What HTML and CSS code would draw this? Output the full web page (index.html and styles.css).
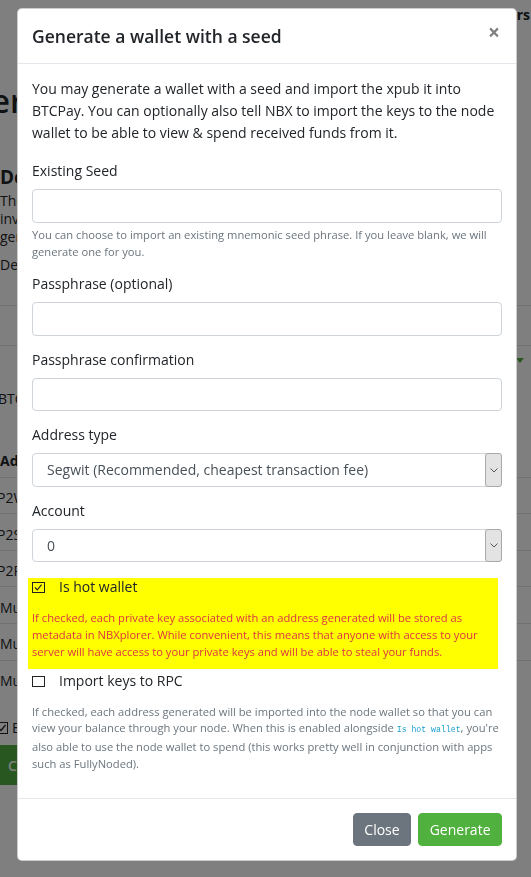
FILE: index.html
```html
<!DOCTYPE html>
<html lang="en">
<head>
<meta charset="utf-8">
<title>Generate a wallet with a seed</title>
<link rel="stylesheet" href="styles.css">
</head>
<body>
<div class="page">
  <nav class="topnav"><span class="nav-item">Server settings</span><span class="nav-item">Users</span></nav>
  <h2 class="page-title">Derivation Scheme</h2>
  <h4 class="section-title">Derivation Scheme</h4>
  <p class="section-text">The DerivationScheme represents the destination of the funds<br>invoices. It is generated by your wallet software. Please verify<br>generating the right addresses.</p>
  <div class="scheme-label">DerivationScheme</div>
  <div class="scheme-box"></div>
  <div class="toggle-row"><span class="caret"></span></div>
  <div class="coin-line">BTC address type</div>
  <div class="bg-table">
    <div class="bg-row bg-head">Address type</div>
    <div class="bg-row shifted">P2WPKH</div>
    <div class="bg-row shifted">P2SH-P2WPKH</div>
    <div class="bg-row shifted">P2PKH</div>
    <div class="bg-row">Multi-sig P2WSH</div>
    <div class="bg-row">Multi-sig P2SH-P2WSH</div>
    <div class="bg-row">Multi-sig P2SH</div>
  </div>
  <div class="bg-check"><span class="bg-box"><svg width="10" height="10" viewBox="0 0 10 10"><polyline points="1.5,5 4,7.5 8.5,2" fill="none" stroke="#212529" stroke-width="1.3"/></svg></span><span>Enabled</span></div>
  <div class="bg-btn">Continue</div>
</div>

<div class="backdrop"></div>

<div class="modal">
  <div class="modal-content">
    <div class="modal-header">
      <h5 class="modal-title">Generate a wallet with a seed</h5>
      <button class="close" type="button">×</button>
    </div>
    <div class="modal-body">
      <p class="intro">You may generate a wallet with a seed and import the xpub it into BTCPay. You can optionally also tell NBX to import the keys to the node wallet to be able to view &amp; spend received funds from it.</p>

      <div class="form-group">
        <label class="form-label">Existing Seed</label>
        <input class="form-control" type="text">
        <div class="form-text">You can choose to import an existing mnemonic seed phrase. If you leave blank, we will generate one for you.</div>
      </div>

      <div class="form-group">
        <label class="form-label">Passphrase (optional)</label>
        <input class="form-control" type="password">
      </div>

      <div class="form-group">
        <label class="form-label">Passphrase confirmation</label>
        <input class="form-control" type="password">
      </div>

      <div class="form-group">
        <label class="form-label">Address type</label>
        <div class="select-box">
          <span class="select-value">Segwit (Recommended, cheapest transaction fee)</span>
          <span class="select-arrow"><svg width="8" height="5" viewBox="0 0 8 5"><polyline points="0.5,0.5 4,4 7.5,0.5" fill="none" stroke="#555" stroke-width="1"/></svg></span>
        </div>
      </div>

      <div class="form-group">
        <label class="form-label">Account</label>
        <div class="select-box">
          <span class="select-value">0</span>
          <span class="select-arrow"><svg width="8" height="5" viewBox="0 0 8 5"><polyline points="0.5,0.5 4,4 7.5,0.5" fill="none" stroke="#555" stroke-width="1"/></svg></span>
        </div>
      </div>

      <div class="hot-wallet">
        <div class="check-row">
          <span class="check-box"><svg width="11" height="11" viewBox="0 0 11 11"><polyline points="2,5.5 4.5,8 9,2.5" fill="none" stroke="#222" stroke-width="1.2"/></svg></span>
          <span class="check-label">Is hot wallet</span>
        </div>
        <div class="danger-text">If checked, each private key associated with an address generated will be stored as metadata in NBXplorer. While convenient, this means that anyone with access to your server will have access to your private keys and will be able to steal your funds.</div>
      </div>

      <div class="check-row rpc-row">
        <span class="check-box"></span>
        <span class="check-label">Import keys to RPC</span>
      </div>
      <div class="form-text rpc-help">If checked, each address generated will be imported into the node wallet so that you can view your balance through your node. When this is enabled alongside <code>Is hot wallet</code>, you're also able to use the node wallet to spend (this works pretty well in conjunction with apps such as FullyNoded).</div>
    </div>
    <div class="modal-footer">
      <button class="btn btn-secondary" type="button">Close</button>
      <button class="btn btn-primary" type="button">Generate</button>
    </div>
  </div>
</div>
</body>
</html>
```

FILE: styles.css
```css
* { box-sizing: border-box; }

html, body {
  margin: 0;
  padding: 0;
}

body {
  width: 531px;
  height: 877px;
  overflow: hidden;
  background: #fff;
  color: #212529;
  font-family: "Open Sans", "Liberation Sans", sans-serif;
  font-size: 14px;
  line-height: 1.5;
}

/* ---------- background page ---------- */
.page {
  white-space: nowrap;
}

.topnav {
  height: 81px;
  display: flex;
  justify-content: flex-end;
  gap: 20px;
  padding: 5px 1px 0 0;
  font-size: 14px;
  font-weight: 700;
  line-height: 20px;
}

.page-title {
  margin: 0 0 0 -32px;
  font-size: 32px;
  font-weight: 600;
  line-height: 40px;
}

.section-title {
  margin: 44px 0 0;
  font-size: 19px;
  font-weight: 700;
  line-height: 24px;
}

.section-text {
  margin: 3px 0 0;
  line-height: 18px;
}

.scheme-label {
  margin-top: 10px;
  line-height: 18px;
}

.scheme-box {
  margin-top: 31px;
  height: 41px;
  border-top: 1px solid #dee2e6;
  border-bottom: 1px solid #dee2e6;
}

.toggle-row {
  height: 28px;
  display: flex;
  justify-content: flex-end;
  align-items: center;
  padding-right: 7px;
}

.caret {
  width: 0;
  height: 0;
  border-left: 4px solid transparent;
  border-right: 4px solid transparent;
  border-top: 5px solid #51b13e;
}

.coin-line {
  margin: 16px 0 0 -2px;
  line-height: 18px;
}

.bg-table {
  margin-top: 32px;
}

.bg-row {
  height: 36.6px;
  padding-top: 9.5px;
  line-height: 22px;
  border-top: 1px solid #dee2e6;
}

.bg-head {
  border-top: none;
  font-weight: 700;
}

.bg-row.shifted {
  margin-left: -3px;
}

.bg-check {
  margin: 21px 0 0 -4px;
  display: flex;
  align-items: center;
  gap: 4px;
  line-height: 22px;
}

.bg-box {
  width: 12px;
  height: 12px;
  border: 1px solid #212529;
  display: flex;
  align-items: center;
  justify-content: center;
}

.bg-btn {
  margin: 6px 0 0 -4px;
  width: 120px;
  height: 40px;
  padding: 0 12px;
  display: flex;
  align-items: center;
  background: #51b13e;
  color: #fff;
  font-weight: 600;
}

.backdrop {
  position: fixed;
  inset: 0;
  background: rgba(0, 0, 0, 0.5);
}

/* ---------- modal ---------- */
.modal {
  position: fixed;
  top: 8px;
  left: 17px;
  width: 500px;
}

.modal-content {
  background: #fff;
  border: 1px solid rgba(0, 0, 0, 0.2);
  border-radius: 5px;
}

.modal-header {
  display: flex;
  justify-content: space-between;
  align-items: flex-start;
  padding: 14px;
  border-bottom: 1px solid #e3e6ea;
}

.modal-title {
  margin: 0;
  font-size: 17.5px;
  font-weight: 600;
  line-height: 26.25px;
  color: #212529;
}

.close {
  margin: 0;
  padding: 0 2px 0 0;
  border: 0;
  background: transparent;
  font-family: inherit;
  font-size: 21px;
  font-weight: 700;
  line-height: 19px;
  color: #000;
  opacity: 0.5;
}

.modal-body {
  padding: 14px;
}

.intro {
  margin: 0 0 16px;
  line-height: 22px;
}

.form-group {
  margin-bottom: 13px;
}

.form-label {
  display: block;
  margin-bottom: 8px;
  line-height: 21px;
}

.form-control {
  display: block;
  width: 100%;
  height: 33.5px;
  padding: 0 10.5px;
  border: 1px solid #ced4da;
  border-radius: 4px;
  font: inherit;
  color: #495057;
  background: #fff;
}

.form-text {
  margin-top: 4px;
  font-size: 11.2px;
  line-height: 16.8px;
  color: #6c757d;
}

.select-box {
  display: flex;
  height: 33.5px;
  border: 1px solid #ced4da;
  border-radius: 4px;
  background: #fff;
}

.select-value {
  flex: 1;
  padding-left: 14px;
  line-height: 31.5px;
  color: #495057;
}

.select-arrow {
  width: 17px;
  margin: -1px -1px -1px 0;
  display: flex;
  align-items: center;
  justify-content: center;
  background: #e3e3e3;
  border: 1px solid #a9a9a9;
  border-radius: 3px;
}

.hot-wallet {
  margin: 15.6px 0 0 -4px;
  width: 470px;
  padding: 0 0 8.6px 4px;
  background: #ffff00;
}

.check-row {
  display: flex;
  align-items: flex-start;
  line-height: 18px;
}

.check-box {
  width: 12.5px;
  height: 11.5px;
  margin-top: 4px;
  border: 1.2px solid #222;
  display: flex;
  align-items: center;
  justify-content: center;
}

.check-label {
  margin-left: 14.5px;
  font-size: 14px;
}

.danger-text {
  margin-top: 14px;
  font-size: 11.2px;
  line-height: 16.8px;
  color: #dc3545;
}

.rpc-row {
  margin-top: 2.6px;
}

.rpc-help {
  margin-top: 14px;
  margin-bottom: 11px;
}

.rpc-help code {
  font-family: "Liberation Mono", "DejaVu Sans Mono", monospace;
  font-size: 8.2px;
  color: #1b9fd1;
}

.modal-footer {
  display: flex;
  justify-content: flex-end;
  gap: 7px;
  padding: 14px;
  border-top: 1px solid #e3e6ea;
}

.btn {
  height: 33.5px;
  padding: 0 10.5px;
  border: 1px solid transparent;
  border-radius: 4px;
  font-family: inherit;
  font-size: 14px;
  line-height: 31.5px;
  color: #fff;
}

.btn-secondary {
  background: #6c757d;
  border-color: #6c757d;
}

.btn-primary {
  background: #51b13e;
  border-color: #51b13e;
}
```
